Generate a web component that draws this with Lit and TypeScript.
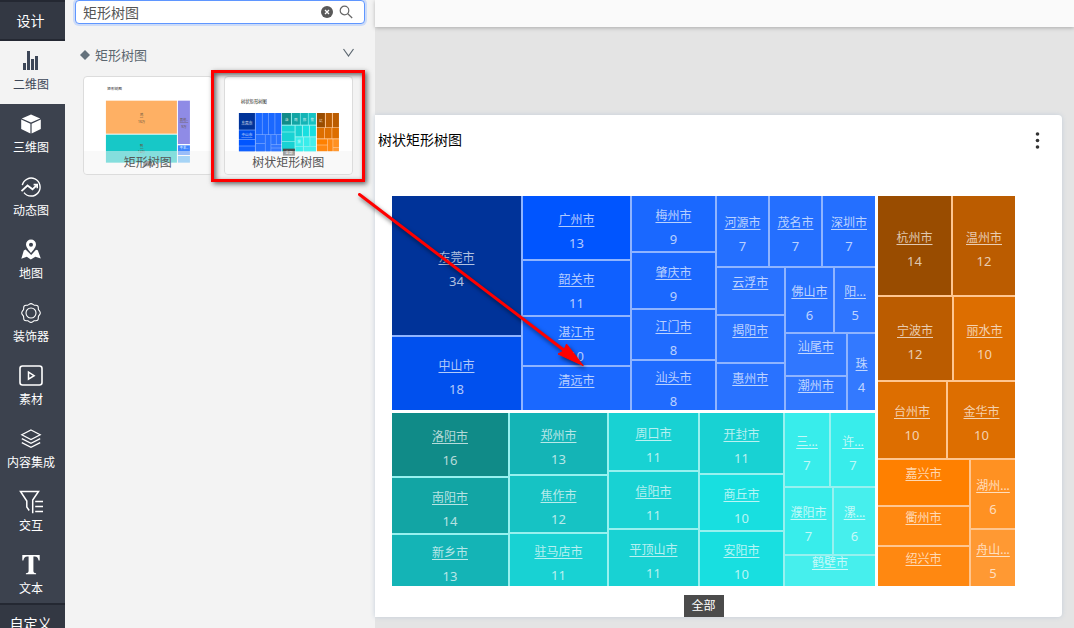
import { LitElement, html, svg, css, nothing } from "lit";
import { customElement, property, state } from "lit/decorators.js";

interface MapNode {
  size: number;
  name?: string;
  value?: number;
  color?: string;
  dir?: "row" | "col";
  children?: MapNode[];
}

const leaf = (size: number, name: string, color: string, value?: number): MapNode => ({ size, name, color, value });
const row = (size: number, ...children: MapNode[]): MapNode => ({ size, dir: "row", children });
const col = (size: number, ...children: MapNode[]): MapNode => ({ size, dir: "col", children });

const guangdong = row(
  214,
  col(129, leaf(139, "东莞市", "#003399", 34), leaf(73, "中山市", "#0050ee", 18)),
  col(
    107,
    leaf(63, "广州市", "#0055ff", 13),
    leaf(54, "韶关市", "#0f60ff", 11),
    leaf(48, "湛江市", "#1565ff", 10),
    leaf(43, "清远市", "#1a68ff")
  ),
  col(
    83,
    leaf(55, "梅州市", "#1a68ff", 9),
    leaf(55, "肇庆市", "#1a68ff", 9),
    leaf(49, "江门市", "#1f6bff", 8),
    leaf(49, "汕头市", "#1f6bff", 8)
  ),
  col(
    158,
    row(70, leaf(51, "河源市", "#246fff", 7), leaf(51, "茂名市", "#246fff", 7), leaf(52, "深圳市", "#246fff", 7)),
    row(
      142,
      col(67, leaf(46, "云浮市", "#2972ff"), leaf(46, "揭阳市", "#2972ff"), leaf(46, "惠州市", "#2972ff")),
      col(
        90,
        row(64, leaf(48, "佛山市", "#2972ff", 6), leaf(40, "阳...", "#2e75ff", 5)),
        row(76, col(61, leaf(41, "汕尾市", "#3077ff"), leaf(33, "潮州市", "#3077ff")), leaf(27, "珠", "#3379ff", 4))
      )
    )
  )
);

const henan = row(
  173,
  col(116, leaf(63, "洛阳市", "#108b88", 16), leaf(55, "南阳市", "#12a5a4", 14), leaf(51, "新乡市", "#14b4b6", 13)),
  col(97, leaf(61, "郑州市", "#14b4b6", 13), leaf(56, "焦作市", "#16c3c4", 12), leaf(52, "驻马店市", "#18d2d3", 11)),
  col(89, leaf(57, "周口市", "#18d2d3", 11), leaf(56, "信阳市", "#18d2d3", 11), leaf(56, "平顶山市", "#18d2d3", 11)),
  col(83, leaf(60, "开封市", "#18d2d3", 11), leaf(55, "商丘市", "#18dfe0", 10), leaf(54, "安阳市", "#18dfe0", 10)),
  col(
    90,
    row(73, leaf(44, "三...", "#38edeb", 7), leaf(44, "许...", "#38edeb", 7)),
    row(66, leaf(47, "濮阳市", "#38edeb", 7), leaf(41, "漯...", "#46efed", 6)),
    leaf(30, "鹤壁市", "#46efed")
  )
);

const zhejiang = col(
  390,
  row(99, leaf(73, "杭州市", "#994c00", 14), leaf(62, "温州市", "#bb5c00", 12)),
  row(83, leaf(74, "宁波市", "#bb5c00", 12), leaf(61, "丽水市", "#dd6e00", 10)),
  row(76, leaf(68, "台州市", "#dd6e00", 10), leaf(67, "金华市", "#dd6e00", 10)),
  row(
    126,
    col(91, leaf(45, "嘉兴市", "#ff8000"), leaf(39, "衢州市", "#ff8811"), leaf(39, "绍兴市", "#ff8811")),
    col(44, leaf(68, "湖州...", "#ff9122", 6), leaf(56, "舟山...", "#ff9933", 5))
  )
);

@customElement("tree-map")
class TreeMap extends LitElement {
  static styles = css`
    :host { display: flex; gap: 3px; min-height: 0; }
    .west { flex: 483; display: flex; flex-direction: column; gap: 3px; min-width: 0; }
    .east { flex: 137; display: flex; min-width: 0; }
    .blue { background: #8fb4ff; }
    .teal { background: #97f1ef; }
    .orange { background: #ffc690; }
    .region { display: flex; min-width: 0; min-height: 0; }
    .group { display: flex; gap: 2px; min-width: 0; min-height: 0; }
    .group.row { flex-direction: row; }
    .group.col { flex-direction: column; }
    .cell {
      display: flex;
      align-items: center;
      justify-content: center;
      min-width: 0;
      min-height: 0;
    }
    .label {
      flex: none;
      height: 48px;
      margin-top: 8px;
      text-align: center;
      font-size: 12px;
      line-height: 24px;
      color: rgba(255, 255, 255, 0.7);
    }
    .name {
      display: block;
      color: inherit;
      white-space: nowrap;
      text-decoration: underline;
      text-underline-offset: 2px;
    }
    .value { display: block; font-size: 13px; line-height: 22px; }
  `;

  private draw(n: MapNode): unknown {
    if (n.children) {
      return html`<div class="group ${n.dir}" style="flex:${n.size} 1 0">${n.children.map((c) => this.draw(c))}</div>`;
    }
    return html`<div class="cell" style="flex:${n.size} 1 0;background:${n.color}">
      <div class="label">
        <a class="name" href="#">${n.name}</a>
        ${n.value === undefined ? nothing : html`<span class="value">${n.value}</span>`}
      </div>
    </div>`;
  }

  private region(n: MapNode, tone: string) {
    return html`<div class="region ${tone}" style="flex:${n.size} 1 0">${this.draw(n)}</div>`;
  }

  render() {
    return html`
      <div class="west">${this.region(guangdong, "blue")}${this.region(henan, "teal")}</div>
      <div class="east">${this.region(zhejiang, "orange")}</div>
    `;
  }
}

const icons: Record<string, unknown> = {
  bars: svg`<g fill="currentColor"><rect x="4" y="14" width="3" height="7"/><rect x="8" y="2" width="3" height="19"/><rect x="12" y="10" width="3" height="11"/><rect x="16" y="7" width="3" height="14"/></g>`,
  cube: svg`<path fill="currentColor" d="M12 2.5 21.2 6.4 12 10.6 2.800 6.4zM2.2 7.6l9.200 4.1v9.8l-9.200-4.4zM21.8 7.6l-9.200 4.1v9.8l9.200-4.4z"/>`,
  trend: svg`<g fill="none" stroke="currentColor" stroke-width="1.4"><path d="M3.3 10.2A9 9 0 1 1 5 17.6"/><path stroke-width="1.8" d="M2.5 16.2 8.5 10.5l5 3.8 4.4-4.3"/><path stroke-width="1.6" d="M14.6 9.6h3.6v3.6"/></g>`,
  place: svg`<path fill="currentColor" fill-rule="evenodd" d="M12 1.6a5 5 0 0 0-5 5c0 3.2 5 8.4 5 8.4s5-5.200 5-8.400a5 5 0 0 0-5-5zm0 3.200a2 2 0 1 1 0 4 2 2 0 0 1 0-4z"/><path fill="currentColor" d="M6.600 11.600 4.800 12.600 2.300 20.800 7.800 18.800 11.800 21.400 16.400 18.800 21.800 20.600 18.800 12.200 17 11.800 12.200 17z"/>`,
  rosette: svg`<g fill="none" stroke="currentColor" stroke-width="1.100"><path d="M12 2.600c1.600 0 2 1.300 3.300 1.600 1.300.200 2.400-.500 3.400.600s.400 2.200.700 3.500c.400 1.300 1.900 2 1.900 3.700s-1.500 2.300-1.900 3.600c-.300 1.300.300 2.500-.700 3.500s-2.100.400-3.400.700c-1.300.300-1.700 1.600-3.300 1.600s-2-1.300-3.300-1.600c-1.300-.300-2.400.300-3.400-.700s-.400-2.200-.700-3.500c-.4-1.300-1.900-1.900-1.900-3.600s1.500-2.400 1.900-3.700c.3-1.300-.3-2.400.7-3.500s2.100-.4 3.400-.6C10 3.900 10.400 2.600 12 2.600z"/><circle cx="12" cy="12" r="5"/></g>`,
  media: svg`<g fill="none" stroke="currentColor" stroke-width="1.600"><rect x="1" y="2" width="22" height="19" rx="2.500"/><path stroke-width="1.500" d="M9.500 8.200v7l5.600-3.500z"/></g>`,
  layers: svg`<g fill="none" stroke="currentColor" stroke-width="1.200"><path d="m12 3 9.200 4.800L12 12.500 2.800 7.800z"/><path d="m2.800 11.600 9.200 4.700 9.200-4.700M2.800 15.600l9.200 4.700 9.200-4.700"/></g>`,
  filter: svg`<g fill="none" stroke="currentColor" stroke-width="1.500"><path d="M10.200 20.500 7.800 17V11L1.500 1.500h18L13.700 10v13.200"/><path d="M16.200 11.500H24M16.200 16.500H24M16.200 21.500H24"/></g>`,
  text: svg`<path fill="currentColor" d="M3.300 2h17.400v5.600h-1.100c-.6-2.800-1.400-4-4-4h-1.200V17.800c0 1.800.6 2.200 2.700 2.400V21.200H6.900v-1c2.100-.2 2.700-.6 2.700-2.400V3.600H8.400c-2.600 0-3.400 1.200-4 4H3.300z"/>`,
};

const tools: [string, string][] = [
  ["bars", "二维图"],
  ["cube", "三维图"],
  ["trend", "动态图"],
  ["place", "地图"],
  ["rosette", "装饰器"],
  ["media", "素材"],
  ["layers", "内容集成"],
  ["filter", "交互"],
  ["text", "文本"],
];

@customElement("tool-rail")
class ToolRail extends LitElement {
  @state() private active = "bars";

  static styles = css`
    :host { display: flex; flex-direction: column; min-height: 0; background: #3c424e; color: #fff; }
    button { font: inherit; color: inherit; border: 0; padding: 0; background: none; cursor: pointer; }
    .tab { flex: none; box-sizing: border-box; height: 41px; border-top: 2px solid #242832; border-bottom: 2px solid #242832; background: #333843; font-size: 14px; line-height: 37px; padding-right: 4px; }
    .tools { flex: 1; min-height: 0; display: flex; flex-direction: column; }
    .tool { flex: none; box-sizing: border-box; height: 63px; display: flex; flex-direction: column; align-items: center; gap: 3px; padding: 8px 3px 0 0; font-size: 12px; line-height: 18px; }
    .tool.active { background: #f3f3f3; color: #3c4657; }
    .icon { flex: none; width: 24px; height: 24px; }
    .foot { position: relative; flex: none; box-sizing: border-box; display: flex; align-items: flex-start; justify-content: center; height: 25px; border-top: 2px solid #242832; background: #333843; font-size: 14px; line-height: 20px; padding: 9px 4px 0 0; }
  `;

  render() {
    return html`
      <button class="tab">设计</button>
      <nav class="tools">
        ${tools.map(
          ([id, label]) => html`<button class="tool ${this.active === id ? "active" : ""}" @click=${() => (this.active = id)}>
            <svg class="icon" viewBox="0 0 24 24" aria-hidden="true">${icons[id]}</svg>
            <span>${label}</span>
          </button>`
        )}
      </nav>
      <button class="foot">自定义</button>
    `;
  }
}

type Box = [number, number, number, number, string];
const boxes = (list: Box[]) =>
  list.map(([x, y, w, h, c]) => svg`<rect x=${x} y=${y} width=${w} height=${h} fill=${c}/>`);

const basicThumb = svg`
  <text x="97" y="77" font-size="11" fill="#222">矩形树图</text>
  ${boxes([
    [93, 108, 213, 99, "#feb064"],
    [93, 210, 213, 84, "#17c8c7"],
    [309, 108, 36, 130, "#8f8be6"],
    [309, 242, 36, 29, "#3f86ff"],
    [309, 274, 36, 20, "#58b4f8"],
  ])}
  <g font-size="10" fill="#66543f" text-anchor="middle">
    <text x="200" y="155" text-decoration="underline">鸡</text><text x="200" y="174">16万</text>
    <text x="200" y="248" text-decoration="underline">鸭</text><text x="200" y="266">14万</text>
    <text x="327" y="170" text-decoration="underline">其他..</text><text x="327" y="190">9万</text>
    <text x="327" y="253" fill="#fff">牛羊..</text>
  </g>
  <path d="M205 305v-8l10-8h14l4 16z" fill="#555"/>
`;

const treeThumb = svg`
  <text x="495" y="115" font-size="13" fill="#222">树状矩形树图</text>
  <rect x="489" y="145" width="127" height="115" fill="#7eaaff"/>
  <rect x="618" y="145" width="102" height="115" fill="#97f1ef"/>
  <rect x="723" y="145" width="66" height="115" fill="#ffc690"/>
  ${boxes([
    [489, 145, 48, 50, "#003399"], [489, 197, 48, 26, "#0050ee"], [489, 225, 48, 18, "#0055ff"], [489, 245, 48, 16, "#0f60ff"],
    [540, 145, 18, 64, "#1a68ff"], [560, 145, 17, 64, "#1a68ff"], [579, 145, 17, 64, "#1a68ff"], [598, 145, 18, 64, "#1a68ff"],
    [540, 211, 27, 24, "#246fff"], [540, 237, 27, 24, "#246fff"], [569, 211, 15, 50, "#246fff"],
    [586, 211, 14, 28, "#2972ff"], [602, 211, 14, 28, "#2972ff"], [586, 241, 30, 8, "#3377ff"], [586, 251, 30, 10, "#3377ff"],
    [618, 145, 27, 35, "#108b88"], [648, 145, 24, 35, "#12a5a4"], [674, 145, 22, 35, "#14b4b6"], [698, 145, 22, 35, "#16c3c4"],
    [618, 183, 38, 18, "#18d2d3"], [618, 203, 38, 26, "#18d2d3"], [618, 231, 38, 30, "#18d2d3"],
    [659, 183, 19, 32, "#18d2d3"], [681, 183, 18, 32, "#18dfe0"], [702, 183, 18, 32, "#18dfe0"],
    [659, 218, 22, 26, "#38edeb"], [684, 218, 17, 26, "#38edeb"], [703, 218, 17, 26, "#46efed"],
    [659, 246, 22, 15, "#38edeb"], [684, 246, 36, 15, "#46efed"],
    [723, 145, 24, 43, "#994c00"], [750, 145, 18, 43, "#bb5c00"], [771, 145, 18, 43, "#bb5c00"],
    [723, 190, 22, 31, "#dd6e00"], [747, 190, 20, 31, "#dd6e00"], [769, 190, 20, 31, "#dd6e00"],
    [723, 224, 31, 16, "#ff8000"], [723, 242, 31, 18, "#ff8811"], [756, 224, 14, 36, "#ff8811"],
    [772, 224, 17, 23, "#ff9122"], [772, 249, 17, 11, "#ff9933"],
  ])}
  <g font-size="11" fill="#fff" fill-opacity=".8" text-anchor="middle">
    <text x="513" y="177" text-decoration="underline">东莞市</text>
    <text x="513" y="215" text-decoration="underline">中山市</text>
    <text x="632" y="170">洛</text><text x="660" y="170">南</text><text x="685" y="170">郑</text><text x="709" y="170">焦</text>
    <text x="735" y="173">杭</text><text x="669" y="236">濮</text>
  </g>
  <rect x="621" y="252" width="36" height="21" fill="#4b4b4b"/>
  <text x="639" y="267" font-size="11" fill="#fff" text-anchor="middle">全部</text>
`;

@customElement("chart-picker")
class ChartPicker extends LitElement {
  @state() private query = "矩形树图";
  @state() private open = true;

  static styles = css`
    :host { display: block; background: #f3f3f3; color: #555; }
    button { font: inherit; color: inherit; border: 0; padding: 0; background: none; cursor: pointer; }
    .search { box-sizing: border-box; display: flex; align-items: center; gap: 5px; height: 24px; margin: 0 10px; padding: 0 11px 0 7px; border: 1px solid #5f96ff; border-radius: 4px; background: #fff; box-shadow: 0 0 0 2px #cddcf8; }
    .search input { flex: 1; min-width: 0; border: 0; outline: 0; padding: 0; background: none; font: inherit; font-size: 14px; color: #555; }
    .search button { display: flex; }
    .glyph { width: 14px; height: 14px; }
    .head { box-sizing: border-box; width: 100%; display: flex; align-items: center; height: 30px; margin-top: 16px; padding: 0 20px 0 15px; gap: 5px; font-size: 13px; line-height: 20px; color: #5c6770; }
    .dot { width: 10px; height: 10px; }
    .head span { flex: 1; text-align: left; }
    .chevron { width: 13px; height: 13px; margin-bottom: 6px; }
    .cards { display: grid; grid-template-columns: 1fr 1fr; gap: 11px; padding: 6px 22px 0 18px; }
    .card { position: relative; box-sizing: border-box; height: 99px; border: 1px solid #dcdcdc; border-radius: 4px; background: #fff; overflow: hidden; }
    .thumb { display: block; width: 100%; height: 100%; }
    .caption { position: absolute; left: 0; right: 0; bottom: 0; height: 23px; line-height: 23px; font-size: 12px; text-align: center; background: rgba(243, 243, 243, 0.5); color: #555; }
  `;

  render() {
    return html`
      <div class="search">
        <input type="text" aria-label="搜索" .value=${this.query} @input=${(e: Event) => (this.query = (e.target as HTMLInputElement).value)} />
        <button aria-label="清除" @click=${() => (this.query = "")}>
          <svg class="glyph" viewBox="0 0 14 14"><circle cx="7" cy="7" r="6" fill="#595959"/><path d="m5 5 4 4m0-4-4 4" stroke="#fff" stroke-width="1.300"/></svg>
        </button>
        <button aria-label="查找">
          <svg class="glyph" viewBox="0 0 14 14" fill="none" stroke="#666" stroke-width="1.200"><circle cx="5.500" cy="5.500" r="4.300"/><path d="m8.800 8.800 4.400 4.200"/></svg>
        </button>
      </div>
      <button class="head" aria-expanded=${this.open} @click=${() => (this.open = !this.open)}>
        <svg class="dot" viewBox="0 0 10 10"><path d="m5 0 5 5-5 5-5-5z" fill="#65727c"/></svg>
        <span>矩形树图</span>
        <svg class="chevron" viewBox="0 0 13 13" fill="none" stroke="#5c6770" stroke-width="1.200"><path d="m1.500 3 5 7 5-7"/></svg>
      </button>
      ${this.open
        ? html`<div class="cards">
            <button class="card"><svg class="thumb" viewBox="28 37 381 291">${basicThumb}</svg><span class="caption">矩形树图</span></button>
            <button class="card"><svg class="thumb" viewBox="448 37 381 291">${treeThumb}</svg><span class="caption">树状矩形树图</span></button>
          </div>`
        : nothing}
    `;
  }
}

@customElement("app-root")
class AppRoot extends LitElement {
  @property() heading = "树状矩形树图";

  static styles = css`
    :host { position: relative; display: grid; grid-template-columns: 65px 310px minmax(0, 1fr); grid-template-rows: minmax(0, 1fr); height: 100vh; overflow: hidden; font-family: "Noto Sans", "Noto Sans CJK SC", sans-serif; font-size: 14px; }
    .stage { display: flex; flex-direction: column; min-height: 0; background: #e4e4e4; }
    .topbar { flex: none; height: 27px; background: #fafafa; box-shadow: 0 1px 4px rgba(0, 0, 0, 0.25); }
    .canvas { flex: 1; min-height: 0; display: flex; padding: 88px 12px 11px 0; }
    .sheet { flex: 1; min-width: 0; display: flex; flex-direction: column; background: #fff; border-radius: 0 4px 4px 0; box-shadow: 0 0 5px #c3ceda; }
    .top { display: flex; align-items: center; justify-content: space-between; height: 50px; margin-bottom: 31px; padding: 0 18px 0 3px; }
    h2 { margin: 0; font-size: 14px; font-weight: 400; line-height: 20px; color: #000; }
    .more { border: 0; padding: 0; background: none; display: flex; cursor: pointer; }
    .more svg { width: 13px; height: 20px; }
    tree-map { flex: 1; margin: 0 47px 9px 17px; }
    .crumb { display: flex; justify-content: center; padding: 0 47px 0 17px; }
    .crumb button { border: 0; width: 40px; height: 22px; padding: 0; background: #4b4b4b; color: #fff; font: inherit; font-size: 12px; line-height: 20px; }
    .frame { position: absolute; box-sizing: border-box; left: 211px; top: 70px; width: 154px; height: 112px; border: 3px solid #f00; box-shadow: 2px 2px 5px rgba(0, 0, 0, 0.6), inset 2px 2px 5px rgba(0, 0, 0, 0.6); pointer-events: none; }
    .arrow { position: absolute; left: 350px; top: 180px; width: 250px; height: 200px; filter: drop-shadow(2px 3px 2px rgba(0, 0, 0, 0.55)); pointer-events: none; }
  `;

  render() {
    return html`
      <tool-rail></tool-rail>
      <chart-picker></chart-picker>
      <main class="stage">
        <header class="topbar"></header>
        <div class="canvas">
          <section class="sheet">
            <div class="top">
              <h2>${this.heading}</h2>
              <button class="more" aria-label="更多">
                <svg viewBox="0 0 13 20" fill="#333"><circle cx="6.500" cy="4" r="1.800"/><circle cx="6.500" cy="10.500" r="1.800"/><circle cx="6.500" cy="17" r="1.800"/></svg>
              </button>
            </div>
            <tree-map></tree-map>
            <div class="crumb"><button>全部</button></div>
          </section>
        </div>
      </main>
      <div class="frame"></div>
      <svg class="arrow" viewBox="0 0 250 200" aria-hidden="true">
        <path d="M9.500 14.500 215 171" stroke="#f00" stroke-width="3" stroke-linecap="round"/>
        <path d="M233.300 185.700 208 174l5.500-3 3-7z" fill="#f00" stroke="#f00"/>
      </svg>
    `;
  }
}
